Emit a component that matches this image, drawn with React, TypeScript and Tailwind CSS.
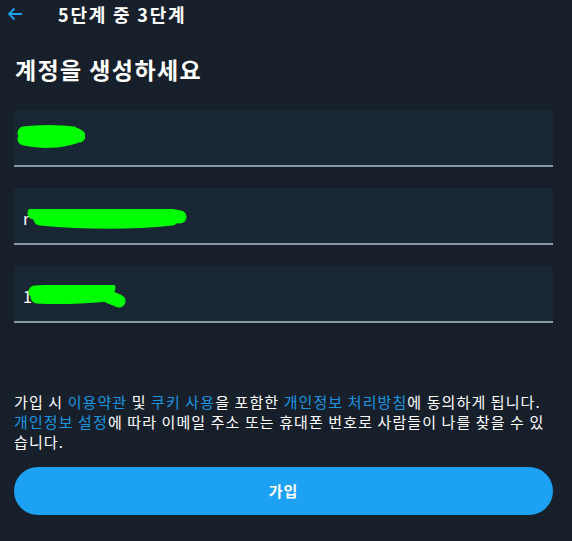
import React from "react"

const font = { fontFamily: '"Noto Sans CJK KR", "Noto Sans", sans-serif' }

// 가려진 값 위 초록 낙서
const fields = [
  { value: "", left: 1, top: 15, w: 70, d: "M9 8 C22 6 45 6 58 8 L64 11 M9 14 C25 18 45 17 60 12" },
  { value: "r", left: 10, top: 21, w: 170, d: "M10 4 C40 2 90 4 140 5 L156 8 M16 10 C60 14 110 14 148 10" },
  { value: "1", left: 13, top: 19, w: 110, d: "M8 7 C30 6 55 4 82 3 M10 12 C40 14 70 11 82 10 M80 11 L92 16" },
]

export default function App() {
  return (
    <div className="w-[572px] h-[541px] bg-[#17202a] text-white overflow-hidden" style={font}>
      {/* 헤더 */}
      <div className="flex items-center h-[28px] pl-[7px]">
        <svg width="16" height="14" viewBox="0 0 16 14" className="mr-[35px]">
          <path d="M15 7 H2 M7.5 1.5 L2 7 L7.5 12.5" stroke="#1da1f2" strokeWidth="1.8" fill="none" />
        </svg>
        <span className="text-[18px] font-bold leading-none tracking-[1.8px]">5단계 중 3단계</span>
      </div>

      <div className="pl-[14px] pr-[19px]">
        <h1 className="text-[23px] font-bold mt-[26px] leading-[30px] pl-[1px] tracking-[1.4px]">계정을 생성하세요</h1>

        {/* 입력 필드 */}
        <div className="flex flex-col gap-[21px] mt-[26px]">
          {fields.map((f, i) => (
            <div key={i} className="relative h-[57px] bg-[#192734] border-b-2 border-[#8899a6] rounded-t-[2px]">
              <span className="absolute left-[9px] top-[20px] text-[16px] leading-[20px] text-white">{f.value}</span>
              <svg
                width={f.w}
                height="26"
                viewBox={`0 0 ${f.w} 26`}
                className="absolute"
                style={{ left: f.left, top: f.top }}
              >
                <path d={f.d} fill="none" stroke="#00ff00" strokeWidth="13" strokeLinecap="round" strokeLinejoin="round" />
              </svg>
            </div>
          ))}
        </div>

        {/* 약관 안내 */}
        <div className="mt-[69px] text-[15px] leading-[20px] text-white tracking-[1.1px] whitespace-nowrap">
          <p>
            가입 시 <span className="text-[#1b95e0]">이용약관</span> 및{" "}
            <span className="text-[#1b95e0]">쿠키 사용</span>을 포함한{" "}
            <span className="text-[#1b95e0]">개인정보 처리방침</span>에 동의하게 됩니다.
          </p>
          <p>
            <span className="text-[#1b95e0]">개인정보 설정</span>에 따라 이메일 주소 또는 휴대폰 번호로 사람들이 나를 찾을 수 있
          </p>
          <p>습니다.</p>
        </div>

        <button className="mt-[15px] w-full h-[48px] rounded-full bg-[#1da1f2] text-white text-[15px] font-bold tracking-[1px]">
          가입
        </button>
      </div>
    </div>
  )
}
